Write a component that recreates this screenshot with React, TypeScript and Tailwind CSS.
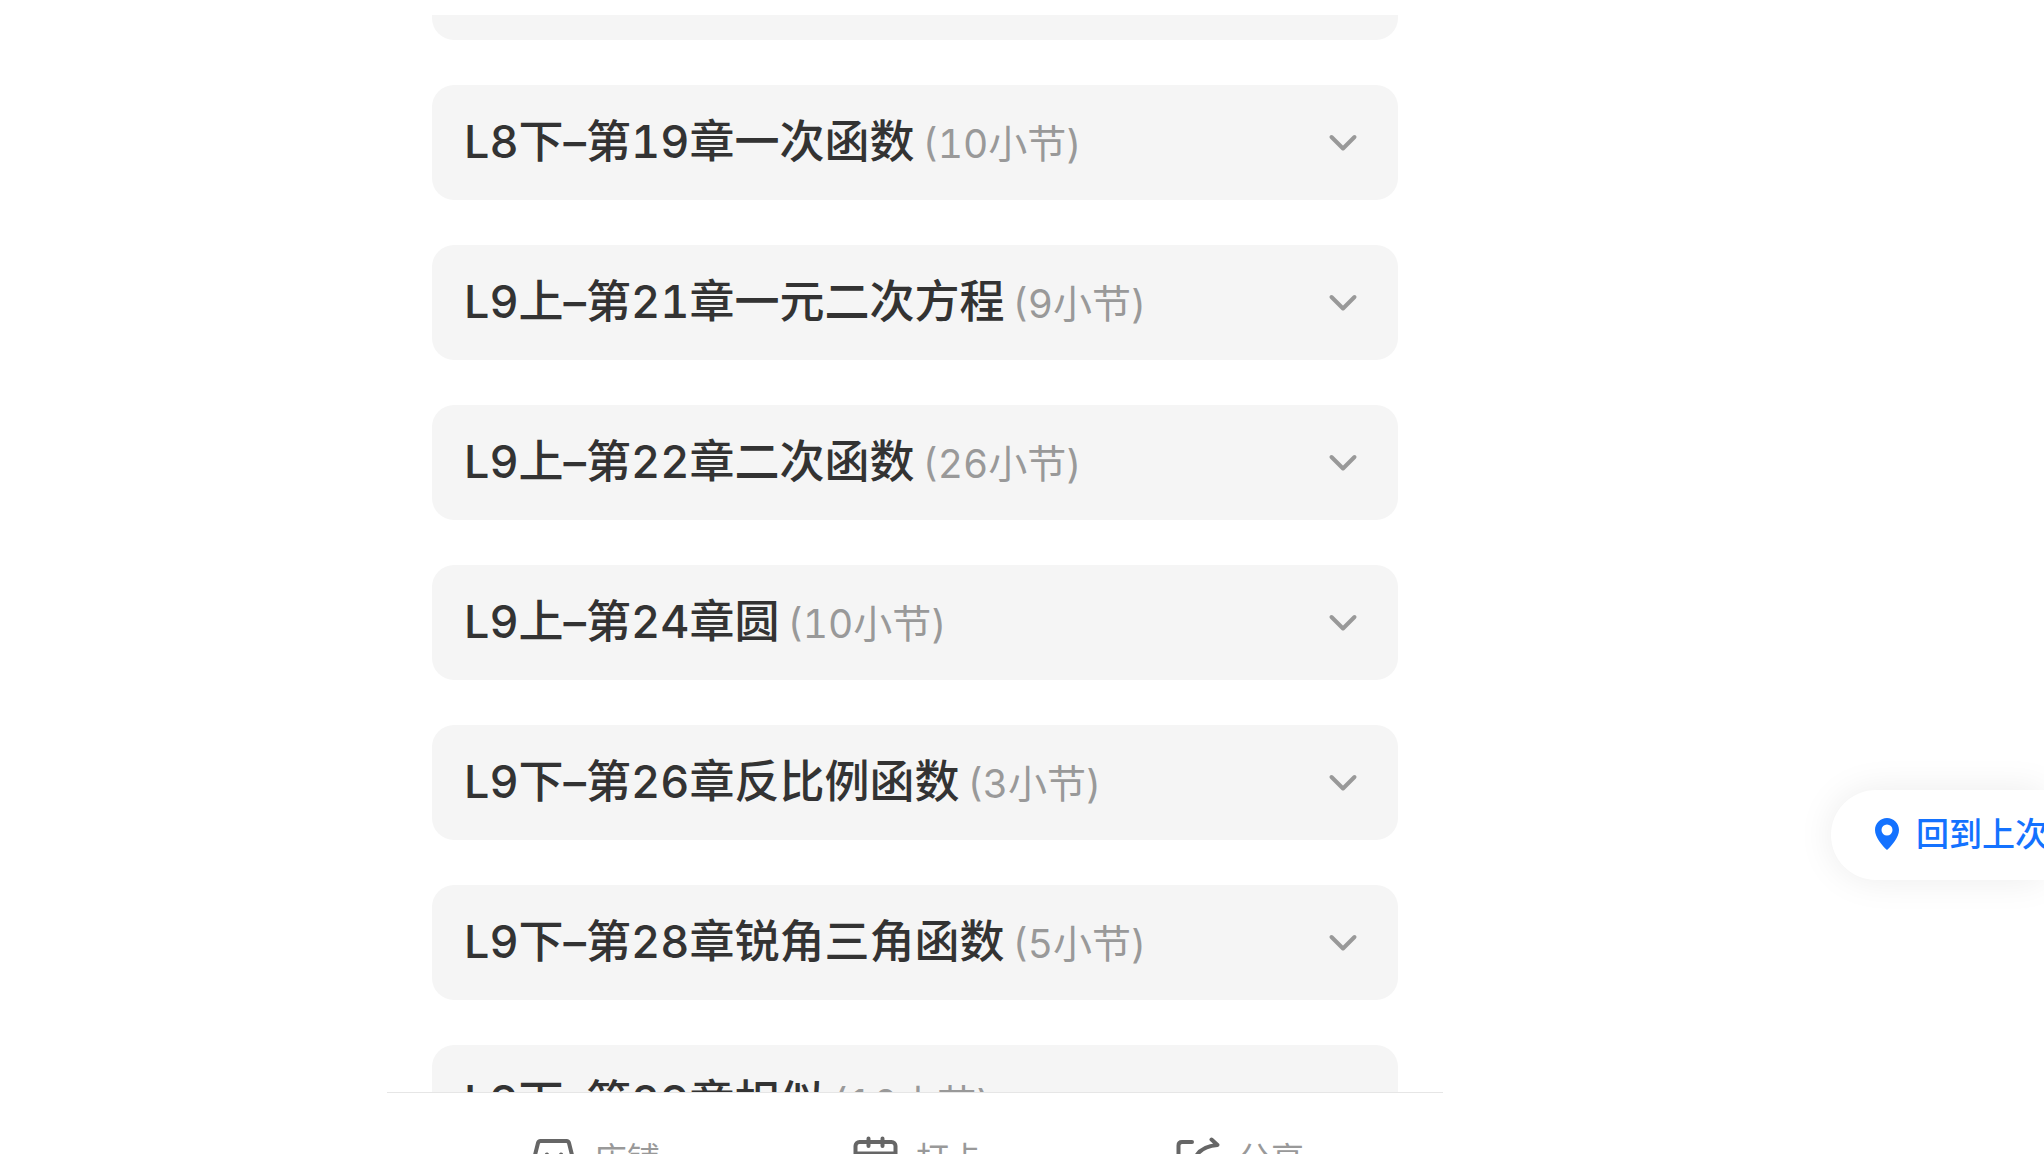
import { useState } from "react";
import type { ReactNode } from "react";
import clsx from "clsx";

type Chapter = {
  title: string;
  count: number;
};

const chapters: Chapter[] = [
  { title: "L8下–第19章一次函数", count: 10 },
  { title: "L9上–第21章一元二次方程", count: 9 },
  { title: "L9上–第22章二次函数", count: 26 },
  { title: "L9上–第24章圆", count: 10 },
  { title: "L9下–第26章反比例函数", count: 3 },
  { title: "L9下–第28章锐角三角函数", count: 5 },
  { title: "L9下–第29章相似", count: 10 },
];

const iconClass = "size-[54px] shrink-0 fill-none stroke-[#666]";

function ShopIcon() {
  return (
    <svg viewBox="0 0 54 54" className={iconClass} strokeWidth="4" strokeLinecap="round" strokeLinejoin="round" aria-hidden="true">
      <path d="M8.500 25 12 11Q12.500 9 14.500 9H40.500Q42.500 9 43 11L46.500 25V43Q46.500 46 44 46H11Q8.500 46 8.500 43Z" />
      <path d="M21 22.500Q28 33 35 22.500" />
    </svg>
  );
}

function CalendarIcon() {
  return (
    <svg viewBox="0 0 54 54" className={iconClass} strokeWidth="4" strokeLinecap="round" strokeLinejoin="round" aria-hidden="true">
      <rect x="7.500" y="10" width="40" height="37" rx="4" />
      <path d="M8 21.500H47M20.500 6.500V14M34.500 6.500V14" />
    </svg>
  );
}

function ShareIcon() {
  return (
    <svg viewBox="0 0 54 54" className={iconClass} strokeWidth="4" strokeLinecap="round" strokeLinejoin="round" aria-hidden="true">
      <path d="M22 10H12Q8.500 10 8.500 13.500V42Q8.500 46 12 46H42Q46 46 46 42V34" />
      <path d="M24 29C27 19 34 14 47.500 13L41.500 7.500" />
    </svg>
  );
}

const actions: { name: string; icon: ReactNode }[] = [
  { name: "店铺", icon: <ShopIcon /> },
  { name: "打卡", icon: <CalendarIcon /> },
  { name: "分享", icon: <ShareIcon /> },
];

function ChapterRow({ title, count }: Chapter) {
  const [open, setOpen] = useState(false);

  return (
    <li className="shrink-0">
      <button
        type="button"
        aria-expanded={open}
        onClick={() => setOpen(!open)}
        className="flex w-full items-center justify-between rounded-[22px] bg-[#f5f5f5] py-[26px] pr-10 pl-8 text-left"
      >
        <span className="flex items-baseline gap-2 leading-[61px] whitespace-nowrap">
          <span className="text-[45px] font-medium text-[#333]">{title}</span>
          <span className="text-[39px] text-[#999]">({count}小节)</span>
        </span>
        <svg
          viewBox="0 0 30 20"
          className={clsx("h-5 w-[30px] shrink-0 fill-none stroke-[#999]", open && "rotate-180")}
          strokeWidth="4"
          strokeLinecap="round"
          strokeLinejoin="round"
          aria-hidden="true"
        >
          <path d="M3.500 4 15 15.500 26.500 4" />
        </svg>
      </button>
    </li>
  );
}

export default function App() {
  return (
    <div className="relative grid h-screen grid-cols-[387fr_1056fr_601fr] overflow-hidden bg-white font-['Inter','Noto_Sans_CJK_SC',sans-serif] tabular-nums">
      <div className="col-start-2 flex min-h-0 flex-col pt-[15px]">
        <main className="min-h-0 flex-1 overflow-hidden px-[45px]">
          <div className="h-[25px] rounded-b-[22px] bg-[#f5f5f5]" />
          <ul className="flex flex-col gap-[45px] pt-[45px]">
            {chapters.map((chapter) => (
              <ChapterRow key={chapter.title} {...chapter} />
            ))}
          </ul>
        </main>
        <footer className="grid h-[62px] shrink-0 grid-cols-3 overflow-hidden border-t border-[#e6e6e6] px-[45px] pt-[39px]">
          {actions.map(({ name, icon }) => (
            <button
              key={name}
              type="button"
              className="flex h-[54px] items-center justify-center gap-[14px] text-[33px] leading-[54px] text-[#999]"
            >
              {icon}
              {name}
            </button>
          ))}
        </footer>
      </div>
      <button
        type="button"
        className="absolute top-[790px] right-0 flex h-[90px] w-[213px] items-center gap-4 rounded-l-full bg-white pl-[43px] text-[33px] font-medium whitespace-nowrap text-[#1472ff] shadow-[0_0_36px_rgba(0,0,0,0.08)]"
      >
        <svg viewBox="0 0 26 34" className="h-[34px] w-[26px] shrink-0 fill-[#1472ff]" aria-hidden="true">
          <path fillRule="evenodd" d="M13 0C19.500 0 25 5 25 12C25 19 18 27.500 13 32C8 27.500 1 19 1 12C1 5 6.500 0 13 0ZM13 6.500A5.500 5.500 0 1 0 13 17.500A5.500 5.500 0 1 0 13 6.500Z" />
        </svg>
        回到上次
      </button>
    </div>
  );
}
